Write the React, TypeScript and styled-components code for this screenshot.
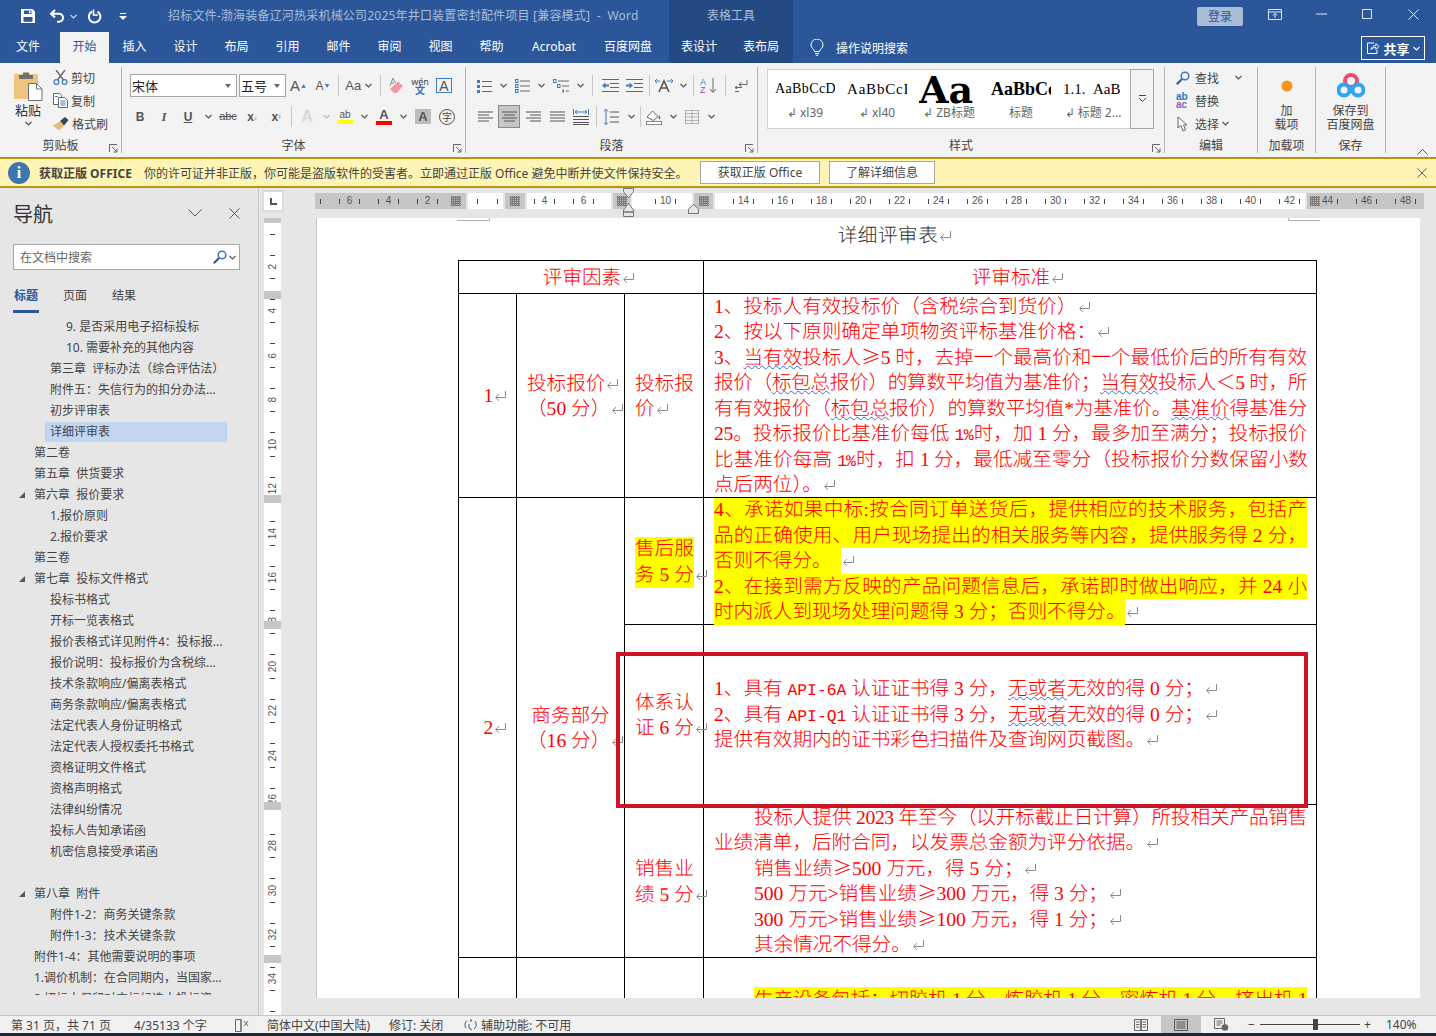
import React from "react";
import styled, { createGlobalStyle } from "styled-components";

const GlobalStyle = createGlobalStyle`
  html, body { margin: 0; padding: 0; background: #e6e6e6; }
  * { box-sizing: border-box; }
  body { font-family: "Noto Sans", "Noto Sans CJK SC", sans-serif; font-size: 12px; color: #444; }
`;

const Shell = styled.div`
  width: 1436px;
  height: 1036px;
  overflow: hidden;
  display: flex;
  flex-direction: column;
`;

/* ---------- title bar ---------- */
const TitleBar = styled.div`
  height: 32px;
  background: #2b579a;
  display: flex;
  align-items: stretch;
`;
const QuickAccess = styled.div`
  width: 168px;
  display: flex;
  align-items: center;
  padding-left: 20px;
`;
const Quick = styled.span<{ $ml: number }>`
  display: flex;
  margin-left: ${p => p.$ml}px;
`;
const DocTitle = styled.div`
  width: 501px;
  line-height: 31px;
  color: #a9bdd9;
  font-size: 12px;
  white-space: pre;
  letter-spacing: 0.2px;
`;
const ToolsTitle = styled.div`
  width: 124px;
  background: #234a82;
  color: #a9bdd9;
  text-align: center;
  line-height: 31px;
`;
const WindowButtons = styled.div`
  margin-left: auto;
  display: flex;
  align-items: center;
`;
const SignIn = styled.div`
  width: 46px;
  height: 19px;
  margin-right: 9px;
  background: #a9bcd6;
  border-radius: 2px;
  color: #2b579a;
  text-align: center;
  line-height: 19px;
`;
const WinBtn = styled.div`
  width: 46px;
  height: 32px;
  display: flex;
  align-items: center;
  justify-content: center;
  padding-bottom: 4px;
`;

/* ---------- tabs ---------- */
const TabBar = styled.div`
  height: 31px;
  background: #2b579a;
  display: flex;
  align-items: stretch;
`;
const Tab = styled.div<{ $w: number; $active?: boolean; $ml?: number }>`
  width: ${p => p.$w}px;
  margin-left: ${p => p.$ml ?? 0}px;
  text-align: center;
  line-height: 30px;
  color: ${p => (p.$active ? "#2b579a" : "#fff")};
  background: ${p => (p.$active ? "#f3f3f3" : "transparent")};
  white-space: nowrap;
`;
const ContextTabs = styled.div`
  display: flex;
  margin-left: 4px;
  background: #234a82;
`;
const TellMe = styled.div`
  display: flex;
  align-items: center;
  margin-left: 17px;
  gap: 12px;
  color: #fff;
`;
const ShareBtn = styled.div`
  margin: 4px 11px 3px auto;
  width: 64px;
  border: 1px solid #fff;
  display: flex;
  align-items: center;
  justify-content: center;
  gap: 3px;
  color: #fff;
  font-weight: 700;
  font-size: 13px;
`;

/* ---------- ribbon ---------- */
const Ribbon = styled.div`
  height: 94px;
  background: #f3f3f3;
  padding-top: 4px;
  display: flex;
  position: relative;
`;
const Group = styled.div<{ $w: number }>`
  width: ${p => p.$w}px;
  height: 86px;
  border-right: 1px solid #b4b4b4;
  display: flex;
  flex-direction: column;
  position: relative;
`;
const GroupBody = styled.div`
  flex: 1;
  display: flex;
  min-height: 0;
`;
const GroupLabel = styled.div`
  height: 17px;
  padding-top: 1px;
  line-height: 18px;
  text-align: center;
  color: #444;
`;
const Launcher = styled.span`
  position: absolute;
  right: 3px;
  bottom: 0;
  display: flex;
`;
const PasteCol = styled.div`
  width: 56px;
  display: flex;
  flex-direction: column;
  align-items: center;
  padding-top: 4px;
  line-height: 18px;
  font-size: 13px;
  color: #333;
`;
const PasteChev = styled.span`
  display: flex;
  margin-top: 2px;
`;
const ClipCol = styled.div`
  display: flex;
  flex-direction: column;
  margin: -1px 0 0 -3px;
`;
const ClipRow = styled.div`
  height: 23px;
  display: flex;
  align-items: center;
  gap: 3px;
  color: #444;
`;
const ToolCol = styled.div<{ $pl?: number }>`
  padding: 7px 0 0 ${p => p.$pl ?? 0}px;
  display: flex;
  flex-direction: column;
  gap: 8px;
`;
const ToolRow = styled.div`
  height: 23px;
  display: flex;
  align-items: center;
`;
const Btn = styled.div<{ $w: number; $on?: boolean }>`
  width: ${p => p.$w}px;
  height: 23px;
  flex: none;
  display: flex;
  align-items: center;
  justify-content: center;
  color: #444;
  background: ${p => (p.$on ? "#c6c6c6" : "transparent")};
  outline: ${p => (p.$on ? "1px solid #8a8a8a" : "none")};
  outline-offset: -1px;
`;
const RowSep = styled.div<{ $w: number }>`
  width: ${p => p.$w}px;
  height: 21px;
  flex: none;
  display: flex;
  justify-content: center;
  &::before {
    content: "";
    width: 1px;
    background: #c8c8c8;
  }
`;
const FontBox = styled.div<{ $w: number; $ml?: number }>`
  width: ${p => p.$w}px;
  height: 23px;
  margin-left: ${p => p.$ml ?? 0}px;
  flex: none;
  background: #fff;
  border: 1px solid #a6a6a6;
  display: flex;
  align-items: center;
  justify-content: space-between;
  padding: 0 5px 0 1px;
  font-size: 13px;
  color: #222;
`;
const Caret = styled.span`
  border-left: 3.5px solid transparent;
  border-right: 3.5px solid transparent;
  border-top: 4px solid #666;
`;
const Glyph = styled.span<{ $size?: number; $weight?: number; $color?: string; $serif?: boolean; $italic?: boolean; $line?: string }>`
  font-family: ${p => (p.$serif ? '"Liberation Serif", serif' : '"Liberation Sans", "Noto Sans CJK SC", sans-serif')};
  font-size: ${p => p.$size ?? 13}px;
  font-weight: ${p => p.$weight ?? 400};
  font-style: ${p => (p.$italic ? "italic" : "normal")};
  color: ${p => p.$color ?? "#555"};
  text-decoration: ${p => p.$line ?? "none"};
  line-height: 1;
  white-space: nowrap;
`;
const Colored = styled.span<{ $bar: string }>`
  display: flex;
  flex-direction: column;
  align-items: center;
  &::after {
    content: "";
    width: 16px;
    height: 4px;
    margin-top: 0;
    background: ${p => p.$bar};
  }
`;
const SquareGlyph = styled.span<{ $bg?: string; $border?: string }>`
  width: 16px;
  height: 15px;
  display: flex;
  align-items: center;
  justify-content: center;
  background: ${p => p.$bg ?? "transparent"};
  border: ${p => (p.$border ? `1px solid ${p.$border}` : "none")};
`;
const RoundGlyph = styled.span`
  width: 16px;
  height: 16px;
  border-radius: 50%;
  border: 1px solid #555;
  font-size: 10px;
  line-height: 14px;
  text-align: center;
  color: #444;
`;
const StackGlyph = styled.span`
  display: flex;
  flex-direction: column;
  align-items: center;
  font-size: 9px;
  line-height: 9px;
  color: #444;
  & b {
    color: #2e75b6;
    font-weight: 700;
    font-size: 10px;
  }
`;
const Gallery = styled.div`
  margin: 2px 0 0 9px;
  display: flex;
  height: 60px;
`;
const GalleryList = styled.div`
  width: 363px;
  background: #fff;
  border: 1px solid #d2d2d2;
  border-right: none;
  padding-left: 1px;
  display: flex;
`;
const Style = styled.div`
  width: 72px;
  padding-top: 4px;
  display: flex;
  flex-direction: column;
  align-items: center;
`;
const StylePreview = styled.div<{ $size: number; $weight?: number; $ls?: number; $heavy?: boolean }>`
  width: 60px;
  height: 30px;
  overflow: hidden;
  white-space: nowrap;
  display: flex;
  align-items: center;
  justify-content: flex-start;
  font-family: ${p => (p.$heavy ? '"DejaVu Serif", serif' : '"Liberation Serif", serif')};
  font-size: ${p => p.$size}px;
  font-weight: ${p => p.$weight ?? 400};
  letter-spacing: ${p => p.$ls ?? 0}px;
  color: #000;
`;
const StyleName = styled.div`
  height: 20px;
  line-height: 18px;
  color: #666;
  white-space: nowrap;
`;
const GalleryMore = styled.div`
  width: 24px;
  border: 1px solid #a6a6a6;
  display: flex;
  align-items: center;
  justify-content: center;
`;
const EditCol = styled.div`
  margin-top: -1px;
  padding: 0 0 0 11px;
  display: flex;
  flex-direction: column;
`;
const EditRow = styled.div`
  height: 23px;
  display: flex;
  align-items: center;
  color: #444;
`;
const EditIcon = styled.span`
  width: 19px;
  display: flex;
`;
const BigCol = styled.div`
  flex: 1;
  display: flex;
  flex-direction: column;
  align-items: center;
  line-height: 14px;
  color: #444;
  text-align: center;
`;
const BigIcon = styled.div`
  height: 37px;
  display: flex;
  align-items: center;
  justify-content: center;
`;
const Collapse = styled.span`
  position: absolute;
  right: 8px;
  bottom: 2px;
  display: flex;
`;

/* ---------- message bar ---------- */
const MessageBar = styled.div`
  height: 31px;
  background: #fdf4b5;
  border-top: 2px solid #b8950f;
  border-bottom: 2px solid #b8950f;
  display: flex;
  align-items: center;
  padding-left: 8px;
`;
const InfoDot = styled.span`
  width: 22px;
  height: 22px;
  border-radius: 50%;
  background: #3d77ae;
  color: #fff;
  font: 700 16px/22px "Liberation Serif", serif;
  text-align: center;
`;
const MessageHead = styled.b`
  margin-left: 9px;
  width: 105px;
  color: #444;
  white-space: nowrap;
`;
const MessageText = styled.span`
  width: 556px;
  color: #444;
  white-space: nowrap;
`;
const MessageBtn = styled.div<{ $w: number; $ml: number }>`
  width: ${p => p.$w}px;
  height: 23px;
  margin-left: ${p => p.$ml}px;
  background: #fff;
  border: 1px solid #a6a6a6;
  text-align: center;
  line-height: 21px;
  color: #444;
`;
const MessageClose = styled.span`
  margin: 0 9px 0 auto;
  display: flex;
`;

/* ---------- main area ---------- */
const Main = styled.div`
  height: 827px;
  display: flex;
  background: #e6e6e6;
  overflow: hidden;
`;
const Nav = styled.div`
  width: 259px;
  flex: none;
  border-right: 1px solid #c6c6c6;
  display: flex;
  flex-direction: column;
`;
const NavHead = styled.div`
  height: 56px;
  padding: 6px 15px 0 13px;
  display: flex;
  align-items: center;
  font-size: 20px;
  color: #333;
`;
const NavHeadTitle = styled.span`
  flex: 1;
  padding-bottom: 12px;
`;
const NavHeadBtn = styled.span<{ $mr?: number }>`
  display: flex;
  margin-right: ${p => p.$mr ?? 0}px;
  padding-bottom: 12px;
`;
const NavSearch = styled.div`
  width: 227px;
  height: 26px;
  margin-left: 13px;
  background: #fff;
  border: 1px solid #a6a6a6;
  display: flex;
  align-items: center;
  padding: 0 3px 0 6px;
  color: #666;
`;
const NavSearchText = styled.span`
  flex: 1;
`;
const NavTabs = styled.div`
  height: 43px;
  margin-left: 13px;
  display: flex;
  gap: 23px;
`;
const NavTab = styled.div<{ $active?: boolean }>`
  width: 26px;
  height: 43px;
  padding: 17px 0 0 1px;
  line-height: 18px;
  white-space: nowrap;
  color: ${p => (p.$active ? "#2b579a" : "#444")};
  font-weight: ${p => (p.$active ? 700 : 400)};
  border-bottom: ${p => (p.$active ? "3px solid #2b579a" : "3px solid transparent")};
`;
const NavList = styled.div`
  height: 682px;
  padding-top: 3px;
  overflow: hidden;
`;
const NavRow = styled.div<{ $indent: number; $expand?: boolean }>`
  height: 21px;
  display: flex;
  align-items: center;
  padding-left: ${p => (p.$expand ? 18 : p.$indent - 5)}px;
`;
const NavText = styled.span<{ $sel?: boolean }>`
  height: 20px;
  line-height: 19px;
  padding: 0 5px;
  color: #444;
  white-space: pre;
  ${p => (p.$sel ? "width: 182px; background: #c3d5f0;" : "")}
`;
const NavCaret = styled.span`
  width: 8px;
  height: 8px;
  margin-right: 3px;
  flex: none;
  display: flex;
`;

const Work = styled.div`
  flex: 1;
  min-width: 0;
  display: flex;
  flex-direction: column;
`;
const RulerRow = styled.div`
  height: 30px;
  display: flex;
  position: relative;
  flex: none;
`;
const TabStopBox = styled.div`
  width: 22px;
  height: 22px;
  margin: 2px 0 0 3px;
  background: #fff;
  border: 2px solid #dcdcdc;
  display: flex;
  align-items: center;
  justify-content: center;
`;
const HRuler = styled.div`
  margin: 5px 0 0 31px;
  height: 16px;
  display: flex;
  gap: 2px;
`;
const HSeg = styled.div<{ $w: number; $shade?: boolean }>`
  width: ${p => p.$w}px;
  background: ${p => (p.$shade ? "#c6c6c6" : "#fff")};
  overflow: hidden;
  display: flex;
  align-items: center;
`;
const Hatch = styled.span<{ $ml?: number; $auto?: boolean }>`
  width: 10px;
  height: 10px;
  flex: none;
  margin-left: ${p => (p.$auto ? "auto" : `${p.$ml ?? 0}px`)};
  margin-right: ${p => (p.$auto ? "5px" : "0")};
  position: relative;
  background-color: #b2b2b2;
  background-image:
    repeating-linear-gradient(0deg, #7d7d7d 0 1px, transparent 1px 2px),
    repeating-linear-gradient(90deg, #7d7d7d 0 1px, transparent 1px 2px);
`;
const HMark = styled.span<{ $pad?: number }>`
  width: 39px;
  flex: none;
  padding: 0 9px;
  margin-left: ${p => p.$pad ?? 0}px;
  display: flex;
  align-items: center;
  justify-content: space-between;
  font: 10px/12px "Liberation Sans", sans-serif;
  color: #555;
`;
const HTick = styled.i`
  width: 1px;
  height: 5px;
  background: #444;
  flex: none;
`;
const IndentMarker = styled.span<{ $left: number; $top: number }>`
  position: absolute;
  left: ${p => p.$left}px;
  top: ${p => p.$top}px;
  display: flex;
`;
const DocRow = styled.div`
  flex: 1;
  min-height: 0;
  display: flex;
  align-items: flex-start;
`;
const VRuler = styled.div`
  width: 17px;
  margin-left: 5px;
  height: 797px;
  flex: none;
  display: flex;
  flex-direction: column;
`;
const VBand = styled.div<{ $h: number }>`
  height: ${p => p.$h}px;
  flex: none;
  background: #c6c6c6;
`;
const VSeg = styled.div<{ $h: number }>`
  height: ${p => p.$h}px;
  flex: none;
  background: #fff;
  overflow: hidden;
`;
const VMark = styled.div<{ $pad?: number }>`
  height: 44.5px;
  margin-top: ${p => p.$pad ?? 0}px;
  padding: 10px 0;
  display: flex;
  flex-direction: column;
  align-items: center;
  justify-content: space-between;
`;
const VTick = styled.i`
  width: 5px;
  height: 1px;
  background: #444;
  flex: none;
`;
const VLabel = styled.span`
  font: 10px/12px "Liberation Sans", sans-serif;
  color: #555;
  writing-mode: vertical-rl;
  transform: rotate(180deg);
`;

/* ---------- document page ---------- */
const Page = styled.div`
  width: 1103px;
  height: 780px;
  margin-left: 36px;
  flex: none;
  background: #fff;
  box-shadow: -1px 0 0 #c6c6c6;
  padding: 6px 0 0 141px;
  overflow: hidden;
  position: relative;
  font-family: "Liberation Serif", "Noto Sans CJK SC", serif;
  font-size: 19.6px;
  font-weight: 300;
  line-height: 25.5px;
  color: #f00;
  text-rendering: geometricPrecision;
`;
const CropMark = styled.span<{ $left: number; $w: number; $flip?: boolean }>`
  position: absolute;
  left: ${p => p.$left}px;
  top: 0;
  width: ${p => p.$w}px;
  height: 3px;
  border-bottom: 1px solid #b0b0b0;
  ${p => (p.$flip ? "border-left: 1px solid #b0b0b0;" : "border-right: 1px solid #b0b0b0;")}
`;
const DocTitleLine = styled.div`
  width: 858px;
  padding-left: 16px;
  margin-bottom: 10.5px;
  text-align: center;
  letter-spacing: 0.5px;
  color: #333;
`;
const Table = styled.table`
  width: 858px;
  table-layout: fixed;
  border-collapse: collapse;
`;
const Row = styled.tr<{ $h: number }>`
  height: ${p => p.$h}px;
`;
const Cell = styled.td<{ $center?: boolean; $pt?: number; $shift?: boolean }>`
  border: 1px solid #000;
  padding: ${p => p.$pt ?? 3}px ${p => (p.$shift ? 0 : 10)}px 0 ${p => (p.$shift ? 16 : 10)}px;
  vertical-align: ${p => (p.$pt ? "top" : "middle")};
  text-align: ${p => (p.$center ? "center" : "left")};
  overflow: visible;
  white-space: nowrap;
`;
const WideCell = styled(Cell)`
  padding-top: ${p => p.$pt ?? 0}px;
  padding-left: 10px;
  padding-right: 9px;
`;
const Lines = styled.div`
  margin: -1px 0;
`;
const Line = styled.div<{ $fit?: boolean; $hl?: boolean; $indent?: boolean; $ls?: number }>`
  white-space: normal;
  text-align: ${p => (p.$fit ? "justify" : "left")};
  text-align-last: ${p => (p.$fit ? "justify" : "left")};
  background: ${p => (p.$hl ? "#ff0" : "transparent")};
  margin-left: ${p => (p.$indent ? "40px" : "0")};
  letter-spacing: ${p => p.$ls ?? 0}px;
  height: 25.5px;
  line-height: 27.5px;
`;
const Hl = styled.span`
  display: inline-block;
  background: #ff0;
  height: 25.5px;
  vertical-align: top;
`;
const Squiggle = styled.span`
  text-decoration: underline wavy #2f6fd6 1px;
  text-underline-offset: 1px;
`;
const Half = styled.span`
  font-family: "Liberation Mono", monospace;
  font-size: 16.33px;
`;
const GeSign = styled.span`
  display: inline-block;
  width: 19.6px;
  font-family: "Noto Sans CJK SC", sans-serif;
  line-height: 0;
  text-align: center;
  text-align-last: center;
`;
const ParaMarkSvg = styled.svg`
  display: inline-block;
  vertical-align: -1px;
  margin-left: 1px;
`;
const CallOut = styled.div`
  position: absolute;
  left: 299px;
  top: 434px;
  width: 692px;
  height: 156px;
  border: 4px solid #cd1426;
  pointer-events: none;
`;

/* ---------- status bar ---------- */
const StatusBar = styled.div`
  height: 18px;
  background: #f1f1f1;
  border-top: 1px solid #c6c6c6;
  display: flex;
  align-items: center;
  padding-left: 11px;
  color: #444;
  white-space: pre;
`;
const StatusItem = styled.span<{ $w: number; $pl?: number }>`
  width: ${p => p.$w}px;
  padding-left: ${p => p.$pl ?? 0}px;
  flex: none;
  display: flex;
  align-items: center;
`;
const ViewBtn = styled.span<{ $on?: boolean; $w: number }>`
  width: ${p => p.$w}px;
  height: 17px;
  flex: none;
  display: flex;
  align-items: center;
  justify-content: center;
  background: ${p => (p.$on ? "#c6c6c6" : "transparent")};
`;
const Zoom = styled.div`
  width: 100px;
  height: 1px;
  background: #444;
  position: relative;
`;
const ZoomThumb = styled.span`
  position: absolute;
  left: 53px;
  top: -5px;
  width: 5px;
  height: 11px;
  background: #444;
`;
const WinStrip = styled.div`
  height: 3px;
  background: #1c2b33;
`;

/* ---------- icons ---------- */
const Chev = ({ c = "#555", w = 7 }: { c?: string; w?: number }) => (
  <svg width={w} height={5} viewBox="0 0 7 5"><path d="M.5 1 3.5 4 6.5 1" fill="none" stroke={c} strokeWidth="1.2" /></svg>
);
const Launch = () => (
  <svg width={9} height={9} viewBox="0 0 9 9" fill="none" stroke="#666"><path d="M.5 8V.5H8M3 3l5 5M8 4.5V8H4.5" /></svg>
);
const ParaMark = ({ c = "#8a8a8a" }: { c?: string }) => (
  <ParaMarkSvg width={13} height={13} viewBox="0 0 13 13" fill="none" stroke={c}><path d="M11.5 1v6.5H2M5 4.2 1.6 7.5 5 10.8" /></ParaMarkSvg>
);

const IconSave = () => (
  <svg width={16} height={16} viewBox="0 0 16 16"><path fillRule="evenodd" d="M1 1h11.5L15 3.5V15H1zM4 2.5V6h7.5V2.5zM3.5 9v4.8h9V9zM9 3h1.5v2.3H9z" fill="#fff" /></svg>
);
const IconUndo = () => (
  <svg width={16} height={14} viewBox="0 0 16 14" fill="none" stroke="#fff" strokeWidth="2"><path d="M6 1 2 4.8 6 8.5M2.5 4.8H10a4 4 0 0 1 0 8H8" /></svg>
);
const IconRepeat = () => (
  <svg width={15} height={15} viewBox="0 0 15 15" fill="none" stroke="#fff" strokeWidth="2"><path d="M5 2.5A5.8 5.8 0 1 0 10.5 2.6" /><path d="M9.5 0v5.5H14" strokeWidth="1.6" transform="translate(-3 .5)" /></svg>
);
const IconCustomize = () => (
  <svg width={8} height={7} viewBox="0 0 8 7" fill="#fff"><path d="M1 0h6v1H1zM0 3h8L4 7z" /></svg>
);
const IconRibbonDisplay = () => (
  <svg width={14} height={11} viewBox="0 0 14 11" fill="none" stroke="#dfe7f2"><path d="M.5.5h13v10H.5zM.5 3h13M7 9V4.5M5 6.5l2-2 2 2" /></svg>
);
const IconMin = () => <svg width={11} height={2}><path d="M0 1h11" stroke="#dfe7f2" /></svg>;
const IconMax = () => <svg width={10} height={10}><path d="M.5.5h9v9h-9z" fill="none" stroke="#dfe7f2" /></svg>;
const IconClose = ({ c = "#dfe7f2", s = 11 }: { c?: string; s?: number }) => (
  <svg width={s} height={s} viewBox="0 0 11 11"><path d="M.5.5l10 10M10.5.5l-10 10" stroke={c} /></svg>
);
const IconBulb = () => (
  <svg width={14} height={17} viewBox="0 0 14 17" fill="none" stroke="#fff"><path d="M4.5 12.5C4 10 1 9 1 6a6 6 0 0 1 12 0c0 3-3 4-3.5 6.5zM5 14.5h4M5.8 16.3h2.4" /></svg>
);
const IconShare = () => (
  <svg width={14} height={14} viewBox="0 0 14 14" fill="none" stroke="#fff"><path d="M8 2H1.5v10.5H11V9M5 8.5C5.5 5.5 8 4.5 10 4.5V2.5L13 5.5 10 8.5V6.5C8 6.5 6 7 5 8.5z" /></svg>
);
const IconPaste = () => (
  <svg width={29} height={30} viewBox="0 0 29 30">
    <rect x="0" y="3" width="24" height="25" rx="1" fill="#efc47d" />
    <path d="M5 4h4V1.5h6V4h4v4H5z" fill="#6e6e6e" />
    <path d="M14.5 12.5h8l5.5 5.5v11.5H14.5z" fill="#fff" stroke="#6e6e6e" />
    <path d="M22.5 12.5V18H28" fill="none" stroke="#6e6e6e" />
  </svg>
);
const IconScissors = () => (
  <svg width={15} height={15} viewBox="0 0 15 15" fill="none">
    <path d="M3 0l7.5 10M12 0 4.5 10" stroke="#666" strokeWidth="1.4" />
    <circle cx="3.4" cy="12" r="2.4" stroke="#3f7cbf" strokeWidth="1.2" />
    <circle cx="11.6" cy="12" r="2.4" stroke="#3f7cbf" strokeWidth="1.2" />
  </svg>
);
const IconCopy = () => (
  <svg width={15} height={15} viewBox="0 0 15 15" fill="#fff" stroke="#666">
    <path d="M.5.5h6l2 2v9h-8z" />
    <path d="M5.5 4.5h6l3 3v7h-9z" />
    <path d="M7.5 8h5M7.5 10h5M7.5 12h5M2 3.5h3" fill="none" stroke="#3f7cbf" />
  </svg>
);
const IconBrush = () => (
  <svg width={16} height={14} viewBox="0 0 16 14">
    <path d="M0 8.5 7 4.500 11 9 6 13.500z" fill="#e5bd78" />
    <path d="M7 4 12 0l3.500 3L11 8.500z" fill="#444" />
  </svg>
);
const IconEraser = () => (
  <svg width={18} height={18} viewBox="0 0 18 18">
    <path d="M7 16 3 12 11 4.500 16 9 9.500 16z" fill="#ee9aa4" />
    <path d="M6 1 3 9M6 1l2.500 5M4 6h3" fill="none" stroke="#888" />
  </svg>
);
const IconBullets = () => (
  <svg width={15} height={14} viewBox="0 0 15 14">
    {[1, 6, 11].map(y => (
      <g key={y}>
        <rect x="0" y={y} width="3" height="3" fill="#3f7cbf" />
        <path d={`M5 ${y + 1.5}h10`} stroke="#666" />
      </g>
    ))}
  </svg>
);
const IconNumbers = () => (
  <svg width={15} height={14} viewBox="0 0 15 14">
    {[0, 5, 10].map(y => (
      <g key={y}>
        <rect x="0.500" y={y + 0.5} width="2.500" height="3" fill="none" stroke="#3f7cbf" />
        <path d={`M5 ${y + 2}h10`} stroke="#666" />
      </g>
    ))}
  </svg>
);
const IconMulti = () => (
  <svg width={17} height={14} viewBox="0 0 17 14">
    <rect x=".5" y=".5" width="2.500" height="3" fill="none" stroke="#3f7cbf" />
    <path d="M5 2h11M9 7h7M13 12h3" stroke="#666" />
    <rect x="4.500" y="5.500" width="2.500" height="3" fill="none" stroke="#3f7cbf" />
    <rect x="9.500" y="10.500" width="1.500" height="3" fill="#666" />
  </svg>
);
const IconIndent = ({ out }: { out?: boolean }) => (
  <svg width={17} height={13} viewBox="0 0 17 13">
    <path d="M0 .5h17M8 4.500h9M8 8.500h9M0 12.500h17" stroke="#666" />
    <path d={out ? "M0 6.500l3.500-3v2H7v2H3.500v2z" : "M7 6.500l-3.500-3v2H0v2h3.500v2z"} fill="#3f7cbf" />
  </svg>
);
const IconDirection = () => (
  <svg width={18} height={16} viewBox="0 0 18 16" fill="none">
    <path d="M4 14 9 3l5 11M6 10h6" stroke="#555" strokeWidth="1.600" />
    <path d="M0 3h5M12 3h6M2 1 0 3l2 2M16 1l2 2-2 2" stroke="#3f7cbf" />
  </svg>
);
const IconSort = () => (
  <svg width={18} height={17} viewBox="0 0 18 17" fill="none">
    <text x="0" y="8" fontSize="9" fill="#3f7cbf" fontFamily="Liberation Sans">A</text>
    <text x="0" y="16" fontSize="9" fill="#8f5cb6" fontFamily="Liberation Sans">Z</text>
    <path d="M13 1v14M10 12l3 3.500 3-3.500" stroke="#666" />
  </svg>
);
const IconPilcrow = () => (
  <svg width={14} height={14} viewBox="0 0 14 14" fill="none" stroke="#666">
    <path d="M13 1v4.500H5M7.500 3 5 5.500 7.500 8M1 8.500h7M1 12.500h4M3 7 1 8.500 3 10" />
  </svg>
);
const aligns: Record<string, [number, number][]> = {
  left: [[0, 15], [0, 11], [0, 15], [0, 11]],
  center: [[0, 15], [2, 13], [0, 15], [2, 13]],
  right: [[0, 15], [4, 15], [0, 15], [4, 15]],
  justify: [[0, 15], [0, 15], [0, 15], [0, 15]],
};
const IconAlign = ({ kind }: { kind: string }) => (
  <svg width={15} height={11} viewBox="0 0 15 11">
    {aligns[kind].map(([a, b], i) => (
      <path key={i} d={`M${a} ${i * 3 + 1}H${b}`} stroke="#555" />
    ))}
  </svg>
);
const IconDistribute = () => (
  <svg width={16} height={16} viewBox="0 0 16 16" fill="none">
    <path d="M.5 0v6M15.500 0v6M2 3h12M4 1 2 3l2 2M12 1l2 2-2 2" stroke="#3f7cbf" />
    <path d="M0 7.500h16M0 10.500h16M0 13.500h16M0 15.500h16" stroke="#555" />
  </svg>
);
const IconSpacing = () => (
  <svg width={16} height={16} viewBox="0 0 16 16" fill="none">
    <path d="M3 0v16M1 2.500 3 .5l2 2M1 13.500l2 2 2-2" stroke="#3f7cbf" />
    <path d="M7 3h9M7 8h9M7 13h9" stroke="#555" />
  </svg>
);
const IconShade = () => (
  <svg width={17} height={16} viewBox="0 0 17 16">
    <path d="M1 8 6.500 2 12 7.500 7.500 11.500z" fill="#fff" stroke="#666" />
    <path d="M13 6c1.500 2 2 3 1 4s-2-.5-1-4z" fill="#3f7cbf" />
    <rect x=".5" y="12.500" width="15" height="3" fill="#fff" stroke="#888" />
  </svg>
);
const IconBorders = () => (
  <svg width={14} height={14} viewBox="0 0 14 14" fill="none" stroke="#777" strokeDasharray="1 1">
    <path d="M.5.5h13v13H.5zM7 .5v13M.5 7h13M.5 3.500h13M.5 10.500h13" />
  </svg>
);
const IconMore = () => (
  <svg width={9} height={8} viewBox="0 0 9 8" fill="none" stroke="#444"><path d="M1 .5h7M1 3l3.500 3.500L8 3" /></svg>
);
const IconFind = () => (
  <svg width={14} height={14} viewBox="0 0 14 14" fill="none">
    <circle cx="9" cy="5" r="3.800" stroke="#3f7cbf" strokeWidth="1.600" />
    <path d="M6 8 .8 13.200" stroke="#2b579a" strokeWidth="2" />
  </svg>
);
const IconCursor = () => (
  <svg width={14} height={16} viewBox="0 0 14 16" fill="#fff" stroke="#666"><path d="M2 1v11l3-2.500L7 15l2.500-1-2-5H11z" /></svg>
);
const ReplaceGlyph = styled.span`
  font: 700 10px/8px "Liberation Sans", sans-serif;
  color: #2e75b6;
  display: flex;
  flex-direction: column;
  & i {
    font-style: normal;
    color: #8f5cb6;
  }
`;
const IconBaidu = () => (
  <svg width={28} height={26} viewBox="0 0 28 26" fill="none">
    <circle cx="14" cy="8" r="6" stroke="#e9526f" strokeWidth="4" />
    <circle cx="7" cy="17" r="5.500" stroke="#2ea7ee" strokeWidth="4" />
    <circle cx="21" cy="17" r="5.500" stroke="#2ea7ee" strokeWidth="4" />
  </svg>
);
const IconBook = () => (
  <svg width={14} height={13} viewBox="0 0 14 13" fill="none" stroke="#666"><path d="M7 1.500v11M.5 1.500H7v11H.5zM7 1.500h6.500v11H7zM2 4h3.500M2 6.500h3.500M2 9h3.500M8.500 4H12M8.500 6.500H12M8.500 9H12" /></svg>
);
const IconPrint = () => (
  <svg width={14} height={12} viewBox="0 0 14 12" fill="none" stroke="#555"><path d="M.5.5h13v11H.5zM2.500 3h9M2.500 5h9M2.500 7h9M2.500 9h9" /></svg>
);
const IconWeb = () => (
  <svg width={15} height={13} viewBox="0 0 15 13" fill="none"><path d="M.5.5h10v10H.5zM2.500 3h6M2.500 5h6M2.500 7h4" stroke="#666" /><circle cx="11" cy="9.500" r="3.300" fill="#666" /></svg>
);
const IconProof = () => (
  <svg width={14} height={14} viewBox="0 0 14 14" fill="none" stroke="#666"><path d="M.5 1.500H6v12H.5zM6 1.500v12M9 3l4 5M13 3 9 8" /></svg>
);
const IconAccess = () => (
  <svg width={15} height={14} viewBox="0 0 15 14" fill="none" stroke="#555"><path d="M4 2.500A5.500 5.500 0 0 0 3 10M11 11a5.500 5.500 0 0 0 1-8M7 1.500l2 1-2 1" /><path d="M6 6v4l3 2" stroke="#2b579a" /></svg>
);

/* ---------- data ---------- */
const tabs: [string, number][] = [
  ["插入", 51], ["设计", 51], ["布局", 51], ["引用", 51], ["邮件", 51],
  ["审阅", 51], ["视图", 51], ["帮助", 51], ["Acrobat", 74], ["百度网盘", 74],
];

const navItems: { t: string; l: number; exp?: boolean; sel?: boolean }[] = [
  { t: "9. 是否采用电子招标投标", l: 66 },
  { t: "10. 需要补充的其他内容", l: 66 },
  { t: "第三章  评标办法（综合评估法）", l: 50 },
  { t: "附件五：失信行为的扣分办法...", l: 50 },
  { t: "初步评审表", l: 50 },
  { t: "详细评审表", l: 50, sel: true },
  { t: "第二卷", l: 34 },
  { t: "第五章  供货要求", l: 34 },
  { t: "第六章  报价要求", l: 34, exp: true },
  { t: "1.报价原则", l: 50 },
  { t: "2.报价要求", l: 50 },
  { t: "第三卷", l: 34 },
  { t: "第七章  投标文件格式", l: 34, exp: true },
  { t: "投标书格式", l: 50 },
  { t: "开标一览表格式", l: 50 },
  { t: "报价表格式详见附件4：投标报...", l: 50 },
  { t: "报价说明：投标报价为含税综...", l: 50 },
  { t: "技术条款响应/偏离表格式", l: 50 },
  { t: "商务条款响应/偏离表格式", l: 50 },
  { t: "法定代表人身份证明格式", l: 50 },
  { t: "法定代表人授权委托书格式", l: 50 },
  { t: "资格证明文件格式", l: 50 },
  { t: "资格声明格式", l: 50 },
  { t: "法律纠纷情况", l: 50 },
  { t: "投标人告知承诺函", l: 50 },
  { t: "机密信息接受承诺函", l: 50 },
  { t: " ", l: 50 },
  { t: "第八章  附件", l: 34, exp: true },
  { t: "附件1-2：商务关键条款", l: 50 },
  { t: "附件1-3：技术关键条款", l: 50 },
  { t: "附件1-4：其他需要说明的事项", l: 34 },
  { t: "1.调价机制：在合同期内，当国家...", l: 34 },
  { t: "2.招标人保留对中标候选人投标资...", l: 34 },
];

const hSegs: { w: number; shade?: boolean; pad: number; marks: string[]; hatch?: "start" | "end" | "only" }[] = [
  { w: 151, shade: true, pad: -24, marks: ["", "6", "4", "2"], hatch: "end" },
  { w: 35, pad: 0, marks: [""] },
  { w: 20, shade: true, pad: 0, marks: [], hatch: "only" },
  { w: 84, pad: -2, marks: ["4", "6"] },
  { w: 17, shade: true, pad: 0, marks: [], hatch: "only" },
  { w: 60, pad: 14, marks: ["10"] },
  { w: 19, shade: true, pad: 0, marks: [], hatch: "only" },
  { w: 590, pad: 9, marks: ["14", "16", "18", "20", "22", "24", "26", "28", "30", "32", "34", "36", "38", "40", "42"] },
  { w: 117, shade: true, pad: -12, marks: ["44", "46", "48"], hatch: "start" },
];

const vSegs: { h: number; pad: number; marks: string[] }[] = [
  { h: 68, pad: -22.75, marks: ["", "2", "4"] },
  { h: 196, pad: -10.25, marks: ["4", "6", "8", "10", "12"] },
  { h: 118, pad: 8, marks: ["14", "16", "18"] },
  { h: 173, pad: -29.25, marks: ["18", "20", "22", "24", "26"] },
  { h: 145, pad: 13.75, marks: ["28", "30", "32"] },
  { h: 52, pad: -6.25, marks: ["34", ""] },
];

const Ge = () => <GeSign>≥</GeSign>;

/* ---------- app ---------- */
export default function App() {
  return (
    <Shell>
      <GlobalStyle />
      <TitleBar>
        <QuickAccess>
          <IconSave />
          <Quick $ml={13}><IconUndo /></Quick>
          <Quick $ml={5}><Chev c="#c9d6e8" /></Quick>
          <Quick $ml={10}><IconRepeat /></Quick>
          <Quick $ml={17}><IconCustomize /></Quick>
        </QuickAccess>
        <DocTitle>招标文件-渤海装备辽河热采机械公司2025年井口装置密封配件项目 [兼容模式]  -  Word</DocTitle>
        <ToolsTitle>表格工具</ToolsTitle>
        <WindowButtons>
          <SignIn>登录</SignIn>
          <WinBtn><IconRibbonDisplay /></WinBtn>
          <WinBtn><IconMin /></WinBtn>
          <WinBtn><IconMax /></WinBtn>
          <WinBtn><IconClose /></WinBtn>
        </WindowButtons>
      </TitleBar>

      <TabBar>
        <Tab $w={56}>文件</Tab>
        <Tab $w={49} $ml={4} $active>开始</Tab>
        {tabs.map(([t, w]) => <Tab key={t} $w={w}>{t}</Tab>)}
        <ContextTabs>
          <Tab $w={60}>表设计</Tab>
          <Tab $w={64}>表布局</Tab>
        </ContextTabs>
        <TellMe><IconBulb />操作说明搜索</TellMe>
        <ShareBtn><IconShare />共享<Chev c="#fff" /></ShareBtn>
      </TabBar>

      <Ribbon>
        <Group $w={122}>
          <GroupBody>
            <PasteCol>
              <IconPaste />
              粘贴
              <PasteChev><Chev /></PasteChev>
            </PasteCol>
            <ClipCol>
              <ClipRow><IconScissors />剪切</ClipRow>
              <ClipRow><IconCopy />复制</ClipRow>
              <ClipRow><IconBrush />格式刷</ClipRow>
            </ClipCol>
          </GroupBody>
          <GroupLabel>剪贴板</GroupLabel>
          <Launcher><Launch /></Launcher>
        </Group>

        <Group $w={344}>
          <GroupBody>
            <ToolCol $pl={6}>
              <ToolRow>
                <FontBox $w={107} $ml={2}>宋体<Caret /></FontBox>
                <FontBox $w={47} $ml={2}>五号<Caret /></FontBox>
                <Btn $w={25}><Glyph $size={15}>A</Glyph><Glyph $size={7} $color="#3f7cbf">▲</Glyph></Btn>
                <Btn $w={24}><Glyph $size={12}>A</Glyph><Glyph $size={7} $color="#3f7cbf">▼</Glyph></Btn>
                <RowSep $w={6} />
                <Btn $w={35}><Glyph $size={13}>Aa&nbsp;</Glyph><Chev /></Btn>
                <RowSep $w={8} />
                <Btn $w={24}><IconEraser /></Btn>
                <Btn $w={24}><StackGlyph>wén<b>文</b></StackGlyph></Btn>
                <Btn $w={24}><SquareGlyph $border="#3f7cbf"><Glyph $size={14}>A</Glyph></SquareGlyph></Btn>
              </ToolRow>
              <ToolRow>
                <Btn $w={24}><Glyph $weight={700} $size={12}>B</Glyph></Btn>
                <Btn $w={24}><Glyph $italic $size={13} $serif $weight={700}>I</Glyph></Btn>
                <Btn $w={24}><Glyph $weight={700} $size={12} $line="underline">U</Glyph></Btn>
                <Btn $w={16}><Chev /></Btn>
                <Btn $w={24}><Glyph $size={11} $line="line-through">abc</Glyph></Btn>
                <Btn $w={24}><Glyph $weight={700} $size={12}>x</Glyph><Glyph $size={7} $color="#3f7cbf">₂</Glyph></Btn>
                <Btn $w={24}><Glyph $weight={700} $size={12}>x</Glyph><Glyph $size={7} $color="#3f7cbf">²</Glyph></Btn>
                <RowSep $w={7} />
                <Btn $w={24}><Glyph $size={16} $weight={700} $color="#d8d8d8">A</Glyph></Btn>
                <Btn $w={14}><Chev c="#bbb" /></Btn>
                <Btn $w={24}><Colored $bar="#ff0"><Glyph $size={10}>ab</Glyph></Colored></Btn>
                <Btn $w={15}><Chev /></Btn>
                <Btn $w={24}><Colored $bar="#f00"><Glyph $size={13} $weight={700}>A</Glyph></Colored></Btn>
                <Btn $w={15}><Chev /></Btn>
                <Btn $w={24}><SquareGlyph $bg="#bdbdbd"><Glyph $size={13} $weight={700}>A</Glyph></SquareGlyph></Btn>
                <Btn $w={24}><RoundGlyph>字</RoundGlyph></Btn>
              </ToolRow>
            </ToolCol>
          </GroupBody>
          <GroupLabel>字体</GroupLabel>
          <Launcher><Launch /></Launcher>
        </Group>

        <Group $w={292}>
          <GroupBody>
            <ToolCol $pl={6}>
              <ToolRow>
                <Btn $w={24}><IconBullets /></Btn>
                <Btn $w={14}><Chev /></Btn>
                <Btn $w={24}><IconNumbers /></Btn>
                <Btn $w={14}><Chev /></Btn>
                <Btn $w={26}><IconMulti /></Btn>
                <Btn $w={12}><Chev /></Btn>
                <RowSep $w={12} />
                <Btn $w={24}><IconIndent out /></Btn>
                <Btn $w={24}><IconIndent /></Btn>
                <RowSep $w={6} />
                <Btn $w={24}><IconDirection /></Btn>
                <Btn $w={14}><Chev /></Btn>
                <RowSep $w={6} />
                <Btn $w={26}><IconSort /></Btn>
                <RowSep $w={6} />
                <Btn $w={26}><IconPilcrow /></Btn>
              </ToolRow>
              <ToolRow>
                <Btn $w={26}><IconAlign kind="left" /></Btn>
                <Btn $w={22} $on><IconAlign kind="center" /></Btn>
                <Btn $w={26}><IconAlign kind="right" /></Btn>
                <Btn $w={22}><IconAlign kind="justify" /></Btn>
                <Btn $w={26}><IconDistribute /></Btn>
                <RowSep $w={4} />
                <Btn $w={26}><IconSpacing /></Btn>
                <Btn $w={14}><Chev /></Btn>
                <RowSep $w={4} />
                <Btn $w={24}><IconShade /></Btn>
                <Btn $w={14}><Chev /></Btn>
                <Btn $w={24}><IconBorders /></Btn>
                <Btn $w={14}><Chev /></Btn>
              </ToolRow>
            </ToolCol>
          </GroupBody>
          <GroupLabel>段落</GroupLabel>
          <Launcher><Launch /></Launcher>
        </Group>

        <Group $w={407}>
          <GroupBody>
            <Gallery>
              <GalleryList>
                <Style>
                  <StylePreview $size={14} $ls={0.4}>AaBbCcDc</StylePreview>
                  <StyleName>↲ xl39</StyleName>
                </Style>
                <Style>
                  <StylePreview $size={15} $ls={0.8}>AaBbCcI</StylePreview>
                  <StyleName>↲ xl40</StyleName>
                </Style>
                <Style>
                  <StylePreview $size={38} $weight={700} $heavy>Aa</StylePreview>
                  <StyleName>↲ ZB标题</StyleName>
                </Style>
                <Style>
                  <StylePreview $size={18} $weight={700}>AaBbCc</StylePreview>
                  <StyleName>标题</StyleName>
                </Style>
                <Style>
                  <StylePreview $size={15}>1.1.&nbsp;&nbsp;AaB</StylePreview>
                  <StyleName>↲ 标题 2...</StyleName>
                </Style>
              </GalleryList>
              <GalleryMore><IconMore /></GalleryMore>
            </Gallery>
          </GroupBody>
          <GroupLabel>样式</GroupLabel>
          <Launcher><Launch /></Launcher>
        </Group>

        <Group $w={93}>
          <GroupBody>
            <EditCol>
              <EditRow><EditIcon><IconFind /></EditIcon>查找&nbsp;&nbsp;&nbsp;&nbsp;&nbsp;<Chev /></EditRow>
              <EditRow><EditIcon><ReplaceGlyph><span>ab</span><i>ac</i></ReplaceGlyph></EditIcon>替换</EditRow>
              <EditRow><EditIcon><IconCursor /></EditIcon>选择&nbsp;<Chev /></EditRow>
            </EditCol>
          </GroupBody>
          <GroupLabel>编辑</GroupLabel>
        </Group>

        <Group $w={58}>
          <GroupBody>
            <BigCol>
              <BigIcon><svg width={14} height={14}><circle cx="7" cy="7" r="5.500" fill="#f7941d" /></svg></BigIcon>
              加<br />载项
            </BigCol>
          </GroupBody>
          <GroupLabel>加载项</GroupLabel>
        </Group>

        <Group $w={70}>
          <GroupBody>
            <BigCol>
              <BigIcon><IconBaidu /></BigIcon>
              保存到<br />百度网盘
            </BigCol>
          </GroupBody>
          <GroupLabel>保存</GroupLabel>
        </Group>

        <Collapse><svg width={11} height={6}><path d="M.5 5.500 5.500.5l5 5" fill="none" stroke="#555" /></svg></Collapse>
      </Ribbon>

      <MessageBar>
        <InfoDot>i</InfoDot>
        <MessageHead>获取正版 OFFICE</MessageHead>
        <MessageText>你的许可证并非正版，你可能是盗版软件的受害者。立即通过正版 Office 避免中断并使文件保持安全。</MessageText>
        <MessageBtn $w={120} $ml={0}>获取正版 Office</MessageBtn>
        <MessageBtn $w={106} $ml={9}>了解详细信息</MessageBtn>
        <MessageClose><IconClose c="#555" s={10} /></MessageClose>
      </MessageBar>

      <Main>
        <Nav>
          <NavHead>
            <NavHeadTitle>导航</NavHeadTitle>
            <NavHeadBtn $mr={27}>
              <svg width={14} height={8}><path d="M.5.5l6.500 6.500L13.500.5" fill="none" stroke="#555" /></svg>
            </NavHeadBtn>
            <NavHeadBtn $mr={3}><IconClose c="#555" /></NavHeadBtn>
          </NavHead>
          <NavSearch>
            <NavSearchText>在文档中搜索</NavSearchText>
            <IconFind />
            <Quick $ml={2}><Chev /></Quick>
          </NavSearch>
          <NavTabs>
            <NavTab $active>标题</NavTab>
            <NavTab>页面</NavTab>
            <NavTab>结果</NavTab>
          </NavTabs>
          <NavList>
            {navItems.map((it, i) => (
              <NavRow key={i} $indent={it.l} $expand={it.exp}>
                {it.exp && (
                  <NavCaret><svg width={8} height={8}><path d="M7 1v6H1z" fill="#555" /></svg></NavCaret>
                )}
                <NavText $sel={it.sel}>{it.t}</NavText>
              </NavRow>
            ))}
          </NavList>
        </Nav>

        <Work>
          <RulerRow>
            <TabStopBox>
              <svg width={8} height={7}><path d="M1 0h2v5h5v2H1z" fill="#555" /></svg>
            </TabStopBox>
            <HRuler>
              {hSegs.map((s, i) => (
                <HSeg key={i} $w={s.w} $shade={s.shade}>
                  {s.hatch === "start" && <Hatch $ml={3} />}
                  {s.hatch === "only" && <Hatch $ml={(s.w - 10) / 2} />}
                  {s.marks.map((m, j) => (
                    <HMark key={j} $pad={j === 0 ? s.pad : 0}>
                      <HTick />
                      {m}
                      <HTick />
                    </HMark>
                  ))}
                  {s.hatch === "end" && <Hatch $auto />}
                </HSeg>
              ))}
            </HRuler>
            <IndentMarker $left={364} $top={0}>
              <svg width={12} height={29} viewBox="0 0 12 29" fill="#e6e6e6" stroke="#777">
                <path d="M.5.5h10v3L5.500 10 .5 3.500zM.5 22l5-6.500 5 6.500v2H.5zM.5 24h10v4.500H.5z" />
              </svg>
            </IndentMarker>
            <IndentMarker $left={429} $top={16}>
              <svg width={12} height={10} viewBox="0 0 12 10" fill="#e6e6e6" stroke="#777"><path d="M.5 9.500V5l5-4.500 5 4.500v4.500z" /></svg>
            </IndentMarker>
          </RulerRow>

          <DocRow>
            <VRuler>
              <VBand $h={5} />
              {vSegs.map((s, i) => (
                <React.Fragment key={i}>
                  <VSeg $h={s.h}>
                    {s.marks.map((m, j) => (
                      <VMark key={j} $pad={j === 0 ? s.pad : 0}>
                        <VTick />
                        <VLabel>{m}</VLabel>
                        <VTick />
                      </VMark>
                    ))}
                  </VSeg>
                  {i < vSegs.length - 1 && <VBand $h={8} />}
                </React.Fragment>
              ))}
            </VRuler>

            <Page>
              <CropMark $left={140} $w={33} />
              <CropMark $left={971} $w={32} $flip />
              <DocTitleLine>详细评审表<ParaMark /></DocTitleLine>
              <Table>
                <colgroup>
                  <col width={58} />
                  <col width={108} />
                  <col width={79} />
                  <col width={613} />
                </colgroup>
                <tbody>
                  <Row $h={33}>
                    <Cell colSpan={3} $center $shift>评审因素<ParaMark /></Cell>
                    <Cell $center $shift>评审标准<ParaMark /></Cell>
                  </Row>
                  <Row $h={204}>
                    <Cell $center $shift>1<ParaMark /></Cell>
                    <Cell $center>投标报价<ParaMark /><br />（50 分）<ParaMark /></Cell>
                    <Cell>投标报<br />价<ParaMark /></Cell>
                    <WideCell>
                      <Lines>
                        <Line>1、投标人有效投标价（含税综合到货价）<ParaMark /></Line>
                        <Line>2、按以下原则确定单项物资评标基准价格：<ParaMark /></Line>
                        <Line $fit>3、<Squiggle>当有效</Squiggle>投标人<Ge />5 时，去掉一个最高价和一个最低价后的所有有效</Line>
                        <Line $fit $ls={-0.4}>报价（<Squiggle>标包总</Squiggle>报价）的算数平均值为基准价；<Squiggle>当有效</Squiggle>投标人＜5 时，所</Line>
                        <Line $fit $ls={-0.4}>有有效报价（<Squiggle>标包总</Squiggle>报价）的算数平均值*为基准价。<Squiggle>基准价</Squiggle>得基准分</Line>
                        <Line $fit $ls={-0.4}>25。投标报价比基准价每低 <Half>1%</Half>时，加 1 分，最多加至满分；投标报价</Line>
                        <Line $fit $ls={-0.9}>比基准价每高 <Half>1%</Half>时，扣 1 分，最低减至零分（投标报价分数保留小数</Line>
                        <Line>点后两位）。<ParaMark /></Line>
                      </Lines>
                    </WideCell>
                  </Row>
                  <Row $h={127}>
                    <Cell rowSpan={3} $center $shift>2<ParaMark /></Cell>
                    <Cell rowSpan={3} $center>商务部分<br />（16 分）<ParaMark /></Cell>
                    <Cell><Hl>售后服</Hl><br /><Hl>务 5 分</Hl><ParaMark /></Cell>
                    <WideCell>
                      <Lines>
                        <Line $fit $hl>4、承诺如果中标:按合同订单送货后，提供相应的技术服务，包括产</Line>
                        <Line $fit $hl>品的正确使用、用户现场提出的相关服务等内容，提供服务得 2 分，</Line>
                        <Line><Hl>否则不得分。&nbsp;&nbsp;</Hl><ParaMark /></Line>
                        <Line $fit $hl>2、在接到需方反映的产品问题信息后，承诺即时做出响应，并 24 小</Line>
                        <Line><Hl>时内派人到现场处理问题得 3 分；否则不得分。</Hl><ParaMark /></Line>
                      </Lines>
                    </WideCell>
                  </Row>
                  <Row $h={180}>
                    <Cell>体系认<br />证 6 分<ParaMark /></Cell>
                    <WideCell>
                      <Lines>
                        <Line>1、具有 <Half>API-6A</Half> 认证证书得 3 分，<Squiggle>无或者</Squiggle>无效的得 0 分；<ParaMark /></Line>
                        <Line>2、具有 <Half>API-Q1</Half> 认证证书得 3 分，<Squiggle>无或者</Squiggle>无效的得 0 分；<ParaMark /></Line>
                        <Line>提供有效期内的证书彩色扫描件及查询网页截图。<ParaMark /></Line>
                      </Lines>
                    </WideCell>
                  </Row>
                  <Row $h={153}>
                    <Cell>销售业<br />绩 5 分<ParaMark /></Cell>
                    <WideCell>
                      <Lines>
                        <Line $fit $indent $ls={-0.4}>投标人提供 2023 年至今（以开标截止日计算）所投相关产品销售</Line>
                        <Line>业绩清单，后附合同，以发票总金额为评分依据。<ParaMark /></Line>
                        <Line $indent>销售业绩<Ge />500 万元，得 5 分；<ParaMark /></Line>
                        <Line $indent>500 万元&gt;销售业绩<Ge />300 万元，得 3 分；<ParaMark /></Line>
                        <Line $indent>300 万元&gt;销售业绩<Ge />100 万元，得 1 分；<ParaMark /></Line>
                        <Line $indent>其余情况不得分。<ParaMark /></Line>
                      </Lines>
                    </WideCell>
                  </Row>
                  <Row $h={100}>
                    <Cell />
                    <Cell />
                    <Cell />
                    <WideCell $pt={29}>
                      <Line $fit $hl $indent $ls={-0.5}>生产设备包括：切胶机 1 分、炼胶机 1 分、密炼机 1 分、挤出机 1</Line>
                    </WideCell>
                  </Row>
                </tbody>
              </Table>
              <CallOut />
            </Page>
          </DocRow>
        </Work>
      </Main>

      <StatusBar>
        <StatusItem $w={123}>第 31 页，共 71 页</StatusItem>
        <StatusItem $w={101}>4/35133 个字</StatusItem>
        <StatusItem $w={32}><IconProof /></StatusItem>
        <StatusItem $w={122}>简体中文(中国大陆)</StatusItem>
        <StatusItem $w={74}>修订: 关闭</StatusItem>
        <StatusItem $w={18}><IconAccess /></StatusItem>
        <StatusItem $w={640}>辅助功能: 不可用</StatusItem>
        <ViewBtn $w={40}><IconBook /></ViewBtn>
        <ViewBtn $w={40} $on><IconPrint /></ViewBtn>
        <ViewBtn $w={40}><IconWeb /></ViewBtn>
        <StatusItem $w={19} $pl={7}>−</StatusItem>
        <Zoom><ZoomThumb /></Zoom>
        <StatusItem $w={26} $pl={4}>+</StatusItem>
        <StatusItem $w={40}>140%</StatusItem>
      </StatusBar>
      <WinStrip />
    </Shell>
  );
}
